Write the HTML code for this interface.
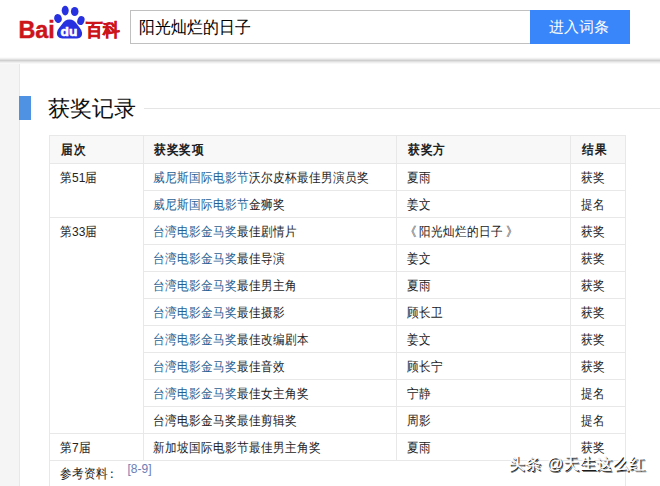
<!DOCTYPE html>
<html><head><meta charset="utf-8">
<style>
*{margin:0;padding:0;box-sizing:border-box}
html,body{width:660px;height:486px;overflow:hidden;background:#fff;font-family:"Liberation Sans",sans-serif;color:#222}
.abs{position:absolute}
#hdr{position:absolute;left:0;top:0;width:660px;height:60px;background:#fff}
#shadow{position:absolute;left:0;top:57px;width:660px;height:7px;background:linear-gradient(#fbfbfb 0,#fbfbfb 14.3%,#f0f0f0 14.3%,#f0f0f0 28.6%,#e0e0e0 28.6%,#e0e0e0 42.9%,#cfcfcf 42.9%,#cfcfcf 57.1%,#e0e0e0 57.1%,#e0e0e0 71.4%,#eeeeee 71.4%,#eeeeee 85.7%,#f8f8f8 85.7%)}
#strip{position:absolute;left:0;top:64px;width:20px;height:423px;background:#f5f5f5;border-right:1px solid #e8e8e8}
#search{position:absolute;left:130px;top:10px;width:401px;height:34px;border:1px solid #c0c0c0;background:#fff}
#search span{position:absolute;left:8px;top:7px;font-size:16px;line-height:20px;color:#000;transform:scaleY(1.07);transform-origin:0 50%;white-space:nowrap}
#btn{position:absolute;left:530px;top:10px;width:100px;height:34px;background:#3886fa;color:#fff;font-size:15.3px;line-height:34px;text-align:center;text-indent:-2px}
#bar{position:absolute;left:19px;top:96px;width:12px;height:24px;background:#4f91e3}
#title{position:absolute;left:48px;top:95px;font-size:22.4px;line-height:28px;color:#111}
#tline{position:absolute;left:144px;top:108px;width:516px;height:1px;background:#e5e5e5}
.h{position:absolute;background:#e8e8e8;height:1px}
.v{position:absolute;background:#e8e8e8;width:1px}
.t{position:absolute;font-size:12px;line-height:16px;white-space:nowrap;transform:translateY(0.6px) scaleY(1.12);transform-origin:0 50%}
.b{font-weight:bold;letter-spacing:0.5px;margin-left:1px}
a{color:#1f6193;text-decoration:none}
#wm{position:absolute;left:508.5px;top:451.5px;letter-spacing:0.45px;font-size:16.4px;font-weight:normal;line-height:22px;color:#fff;-webkit-text-stroke:0.3px #fff;text-shadow:1px 1px 0 #1a1a1a,1.6px 1.6px 0.6px rgba(0,0,0,.55);white-space:nowrap}
</style></head><body>
<div id="hdr">
  <svg class="abs" style="left:0;top:0" width="130" height="50" viewBox="0 0 130 50">
    <text x="18.4" y="38.3" font-family="Liberation Sans" font-weight="bold" font-size="24" fill="#cc141b" stroke="#cc141b" stroke-width="0.45" textLength="36.4" lengthAdjust="spacingAndGlyphs">Bai</text>
    <g fill="#2831e0">
      <ellipse cx="58" cy="18.5" rx="3.8" ry="4.5" transform="rotate(-20 58 18.5)"/>
      <ellipse cx="65.2" cy="10.6" rx="3.5" ry="4.8"/>
      <ellipse cx="74.7" cy="11.5" rx="3.8" ry="4.6"/>
      <ellipse cx="80.9" cy="20.5" rx="3.5" ry="4.6" transform="rotate(20 80.9 20.5)"/>
      <path d="M69.5 19.6 C66 19.6 64 21.5 62 24.2 C60 27 57.5 29 57 32.5 C56.5 36 59 38.4 62.5 38.4 L77 38.4 C80.5 38.4 82.5 36 82 32.5 C81.5 29 79 27 77 24.2 C75 21.5 73 19.6 69.5 19.6 Z"/>
    </g>
    <text x="60.6" y="35.6" font-family="Liberation Sans" font-weight="bold" font-size="13.2" fill="#fff" stroke="#fff" stroke-width="0.6" textLength="16.8" lengthAdjust="spacingAndGlyphs">du</text>
    <text x="86" y="35.8" font-family="Liberation Sans" font-weight="900" font-size="17.5" fill="#cc141b" stroke="#cc141b" stroke-width="0.6" textLength="33.5" lengthAdjust="spacingAndGlyphs">百科</text>
  </svg>
  <div id="search"><span>阳光灿烂的日子</span></div>
  <div id="btn">进入词条</div>
</div>
<div id="shadow"></div>
<div id="strip"></div>
<div id="bar"></div>
<div id="title">获奖记录</div>
<div id="tline"></div>
<div id="table">
  <div class="abs" style="left:50px;top:136px;width:575px;height:27px;background:#f8f8f8"></div>
  <div class="h" style="left:49px;top:135px;width:577px"></div>
  <div class="h" style="left:49px;top:163px;width:577px"></div>
  <div class="h" style="left:143px;top:190px;width:483px"></div>
  <div class="h" style="left:49px;top:217px;width:577px"></div>
  <div class="h" style="left:143px;top:244px;width:483px"></div>
  <div class="h" style="left:143px;top:271px;width:483px"></div>
  <div class="h" style="left:143px;top:298px;width:483px"></div>
  <div class="h" style="left:143px;top:325px;width:483px"></div>
  <div class="h" style="left:143px;top:352px;width:483px"></div>
  <div class="h" style="left:143px;top:379px;width:483px"></div>
  <div class="h" style="left:143px;top:406px;width:483px"></div>
  <div class="h" style="left:49px;top:433px;width:577px"></div>
  <div class="h" style="left:49px;top:460px;width:577px"></div>
  <div class="v" style="left:49px;top:135px;height:351px"></div>
  <div class="v" style="left:143px;top:135px;height:325px"></div>
  <div class="v" style="left:396px;top:135px;height:325px"></div>
  <div class="v" style="left:570px;top:135px;height:325px"></div>
  <div class="v" style="left:625px;top:135px;height:351px"></div>

  <div class="t b" style="left:60px;top:141px">届次</div>
  <div class="t b" style="left:153px;top:141px">获奖奖项</div>
  <div class="t b" style="left:407px;top:141px">获奖方</div>
  <div class="t b" style="left:581px;top:141px">结果</div>

  <div class="t" style="left:60px;top:169px">第51届</div>
  <div class="t" style="left:60px;top:223px">第33届</div>
  <div class="t" style="left:60px;top:439px">第7届</div>

  <div class="t" style="left:153px;top:169px"><a>威尼斯国际电影节</a>沃尔皮杯最佳男演员奖</div>
  <div class="t" style="left:153px;top:196px"><a>威尼斯国际电影节</a>金狮奖</div>
  <div class="t" style="left:153px;top:223px"><a>台湾电影金马奖</a>最佳剧情片</div>
  <div class="t" style="left:153px;top:250px"><a>台湾电影金马奖</a>最佳导演</div>
  <div class="t" style="left:153px;top:277px"><a>台湾电影金马奖</a>最佳男主角</div>
  <div class="t" style="left:153px;top:304px"><a>台湾电影金马奖</a>最佳摄影</div>
  <div class="t" style="left:153px;top:331px"><a>台湾电影金马奖</a>最佳改编剧本</div>
  <div class="t" style="left:153px;top:358px"><a>台湾电影金马奖</a>最佳音效</div>
  <div class="t" style="left:153px;top:385px"><a>台湾电影金马奖</a>最佳女主角奖</div>
  <div class="t" style="left:153px;top:412px">台湾电影金马奖最佳剪辑奖</div>
  <div class="t" style="left:153px;top:439px">新加坡国际电影节最佳男主角奖</div>

  <div class="t" style="left:407px;top:169px">夏雨</div>
  <div class="t" style="left:407px;top:196px">姜文</div>
  <div class="t" style="left:407px;top:223px"><span style="position:relative;left:-2px">《</span>阳光灿烂的日子<span style="position:relative;left:3px">》</span></div>
  <div class="t" style="left:407px;top:250px">姜文</div>
  <div class="t" style="left:407px;top:277px">夏雨</div>
  <div class="t" style="left:407px;top:304px">顾长卫</div>
  <div class="t" style="left:407px;top:331px">姜文</div>
  <div class="t" style="left:407px;top:358px">顾长宁</div>
  <div class="t" style="left:407px;top:385px">宁静</div>
  <div class="t" style="left:407px;top:412px">周影</div>
  <div class="t" style="left:407px;top:439px">夏雨</div>

  <div class="t" style="left:581px;top:169px">获奖</div>
  <div class="t" style="left:581px;top:196px">提名</div>
  <div class="t" style="left:581px;top:223px">获奖</div>
  <div class="t" style="left:581px;top:250px">获奖</div>
  <div class="t" style="left:581px;top:277px">获奖</div>
  <div class="t" style="left:581px;top:304px">获奖</div>
  <div class="t" style="left:581px;top:331px">获奖</div>
  <div class="t" style="left:581px;top:358px">获奖</div>
  <div class="t" style="left:581px;top:385px">提名</div>
  <div class="t" style="left:581px;top:412px">提名</div>
  <div class="t" style="left:581px;top:439px">获奖</div>

  <div class="t" style="left:60px;top:465px">参考资料<span style="position:relative;left:-2px">：</span></div>
  <div class="t" style="left:127.5px;top:459.5px;font-size:12px;color:#6c7db4">[8-9]</div>
</div>
<div id="wm">头条 @天生这么红</div>
</body></html>
